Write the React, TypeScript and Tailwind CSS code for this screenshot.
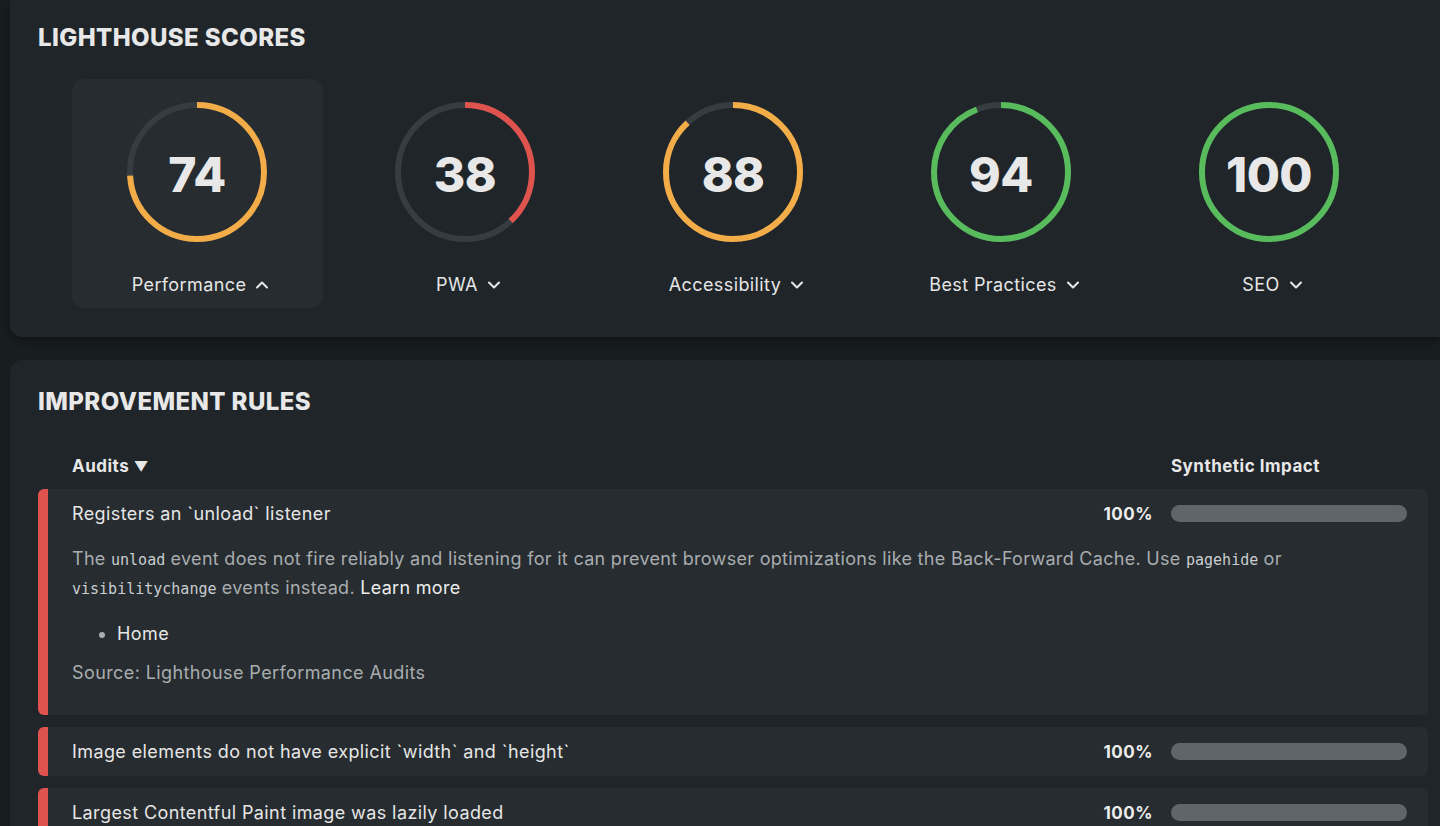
import { ChevronDown, ChevronUp } from "lucide-react";

const scores = [
  { label: "Performance", score: 74, color: "#f2ac48", open: true },
  { label: "PWA", score: 38, color: "#df534e", open: false },
  { label: "Accessibility", score: 88, color: "#f2ac48", open: false },
  { label: "Best Practices", score: 94, color: "#58bb5c", open: false },
  { label: "SEO", score: 100, color: "#58bb5c", open: false },
];

function Gauge({ score, color }: { score: number; color: string }) {
  const r = 67;
  const c = 2 * Math.PI * r;
  return (
    <div className="grid place-items-center">
      <svg width="140" height="140" viewBox="0 0 140 140" className="[grid-area:1/1]">
        <circle cx="70" cy="70" r={r} fill="none" stroke="#363c3f" strokeWidth="6" />
        <circle
          cx="70"
          cy="70"
          r={r}
          fill="none"
          stroke={color}
          strokeWidth="6"
          strokeDasharray={`${(c * score) / 100} ${c}`}
          transform="rotate(-90 70 70)"
        />
      </svg>
      <span className="[grid-area:1/1] pt-[6px] text-[48px] font-extrabold text-[#e8e8e8] tracking-[-0.5px]">
        {score}
      </span>
    </div>
  );
}

function Bar() {
  return (
    <div className="flex items-center gap-[18px]">
      <span className="mt-[4px] text-[17px] font-bold text-[#ececec] tracking-[0.5px]">100%</span>
      <div className="w-[236px] h-[17px] rounded-full bg-[#5f6569]" />
    </div>
  );
}

function Row({ title, children }: { title: string; children?: React.ReactNode }) {
  return (
    <div className="flex rounded-md overflow-hidden bg-[#262c2f]">
      <div className="w-[10px] bg-[#df534e] shrink-0" />
      <div className="flex-1 pl-[24px] pr-[21px] pt-[12px] pb-[13px]">
        <div className="flex items-center justify-between h-[24px]">
          <span className="text-[18px] tracking-[0.4px] text-[#e6e6e6]">{title}</span>
          <Bar />
        </div>
        {children}
      </div>
    </div>
  );
}

const code = "font-['DejaVu_Sans_Mono',monospace] text-[15px] leading-none tracking-normal text-[#c9cccf]";

export default function App() {
  return (
    <div className="min-h-[826px] bg-[#181d20] pl-[10px] font-['Inter',sans-serif] overflow-hidden">
      <section className="bg-[#1f2529] rounded-bl-xl pt-[23px] pb-[29px] pl-[28px] shadow-[0_4px_8px_rgba(0,0,0,0.35)]">
        <h2 className="text-[24px] leading-[30px] font-extrabold tracking-[0.4px] text-[#e8e8e8]">LIGHTHOUSE SCORES</h2>
        <div className="flex mt-[26px] ml-[25px]">
          {scores.map((s) => (
            <div key={s.label} className="w-[268px] flex justify-center">
              <div
                className={`w-[251px] h-[229px] rounded-xl flex flex-col items-center pt-[23px] ${
                  s.open ? "bg-[#262c2f]" : ""
                }`}
              >
                <Gauge score={s.score} color={s.color} />
                <div className="mt-[31px] pl-[10px] flex items-center gap-[6px] text-[18px] tracking-[0.4px] leading-[24px] text-[#e6e6e6]">
                  {s.label}
                  {s.open ? <ChevronUp size={20} strokeWidth={2.5} /> : <ChevronDown size={20} strokeWidth={2.5} />}
                </div>
              </div>
            </div>
          ))}
        </div>
      </section>

      <section className="mt-[23px] bg-[#1f2529] rounded-l-xl pt-[27px] pb-[40px] pl-[28px] pr-[12px]">
        <h2 className="text-[24px] leading-[30px] font-extrabold tracking-[0.4px] text-[#e8e8e8]">IMPROVEMENT RULES</h2>
        <div className="mt-[38px] flex justify-between pl-[34px] pr-[108px] text-[17px] leading-[22px] font-bold tracking-[0.5px] text-[#e8e8e8]">
          <span>
            Audits <span className="text-[14px]">▼</span>
          </span>
          <span>Synthetic Impact</span>
        </div>
        <div className="mt-[11px] flex flex-col gap-[12px]">
          <Row title="Registers an `unload` listener">
            <p className="mt-[19px] text-[18px] leading-[29px] tracking-[0.3px] text-[#a9adb0]">
              The <code className={code}>unload</code> event does not fire reliably and listening for it can prevent
              browser optimizations like the Back-Forward Cache. Use <code className={code}>pagehide</code> or
              <br />
              <code className={code}>visibilitychange</code> events instead.{" "}
              <span className="text-[#ececec]">Learn more</span>
            </p>
            <ul className="mt-[20px] pl-[45px] list-disc marker:text-[#a9adb0] text-[18px] tracking-[0.4px] leading-[24px] text-[#e6e6e6]">
              <li>Home</li>
            </ul>
            <p className="mt-[15px] mb-[17px] text-[18px] tracking-[0.4px] leading-[24px] text-[#a9adb0]">
              Source: Lighthouse Performance Audits
            </p>
          </Row>
          <Row title="Image elements do not have explicit `width` and `height`" />
          <Row title="Largest Contentful Paint image was lazily loaded" />
        </div>
      </section>
    </div>
  );
}
